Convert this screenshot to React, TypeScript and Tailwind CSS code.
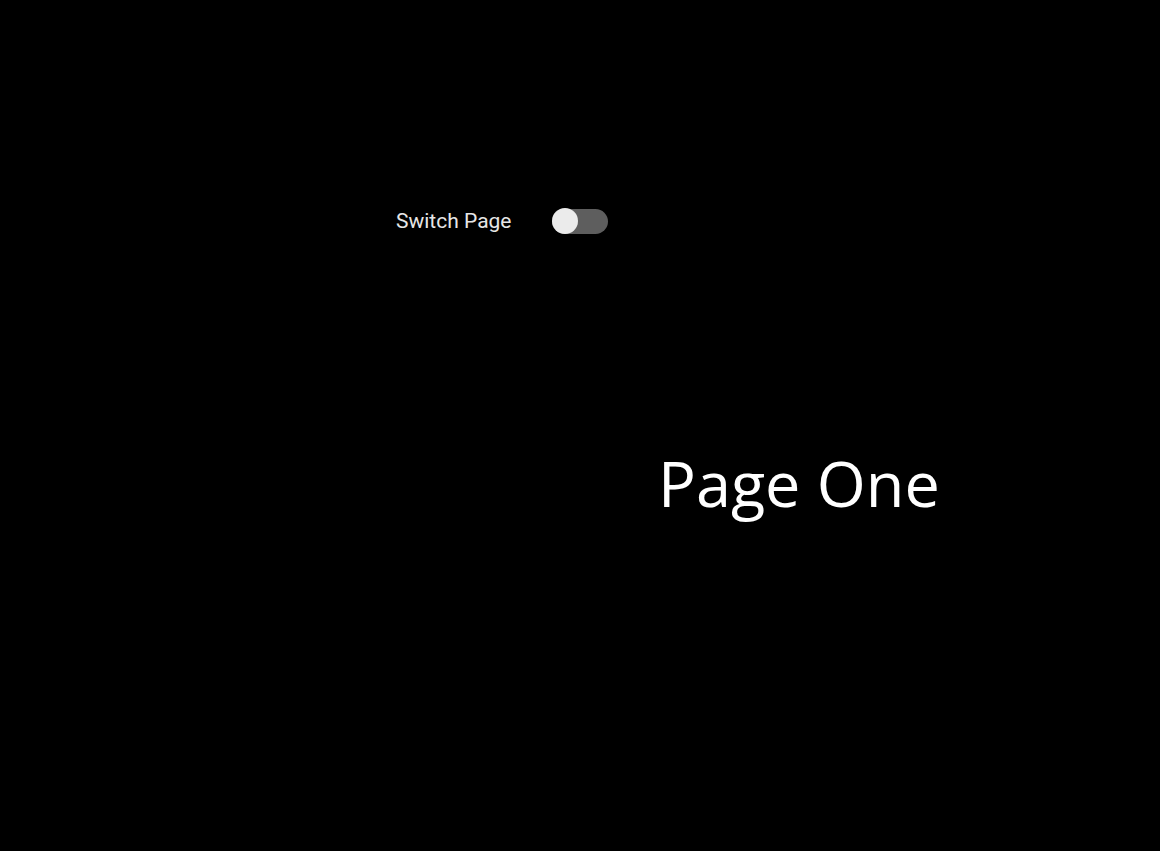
import { useState } from 'react';

export default function App() {
  const [on, setOn] = useState(false);

  return (
    <div className="w-[1160px] h-[851px] bg-black overflow-hidden">
      {/* Toggle row */}
      <div className="flex items-center pt-[208px] pl-[396px]">
        <span className="text-[21px] text-[#e6e6e6] font-['Roboto',sans-serif] leading-[26px]">
          Switch Page
        </span>
        <button
          onClick={() => setOn(!on)}
          className="ml-[41px] w-[56px] h-[25px] rounded-full bg-[#5e5e5e] flex items-center"
        >
          <span className="w-[26px] h-[26px] rounded-full bg-[#ebebeb]" />
        </button>
      </div>

      {/* Page title */}
      <div className="pt-[209px] pl-[658px]">
        <h1 className="text-[63px] text-white font-['Open_Sans',sans-serif] leading-[80px]">
          {on ? 'Page Two' : 'Page One'}
        </h1>
      </div>
    </div>
  );
}
